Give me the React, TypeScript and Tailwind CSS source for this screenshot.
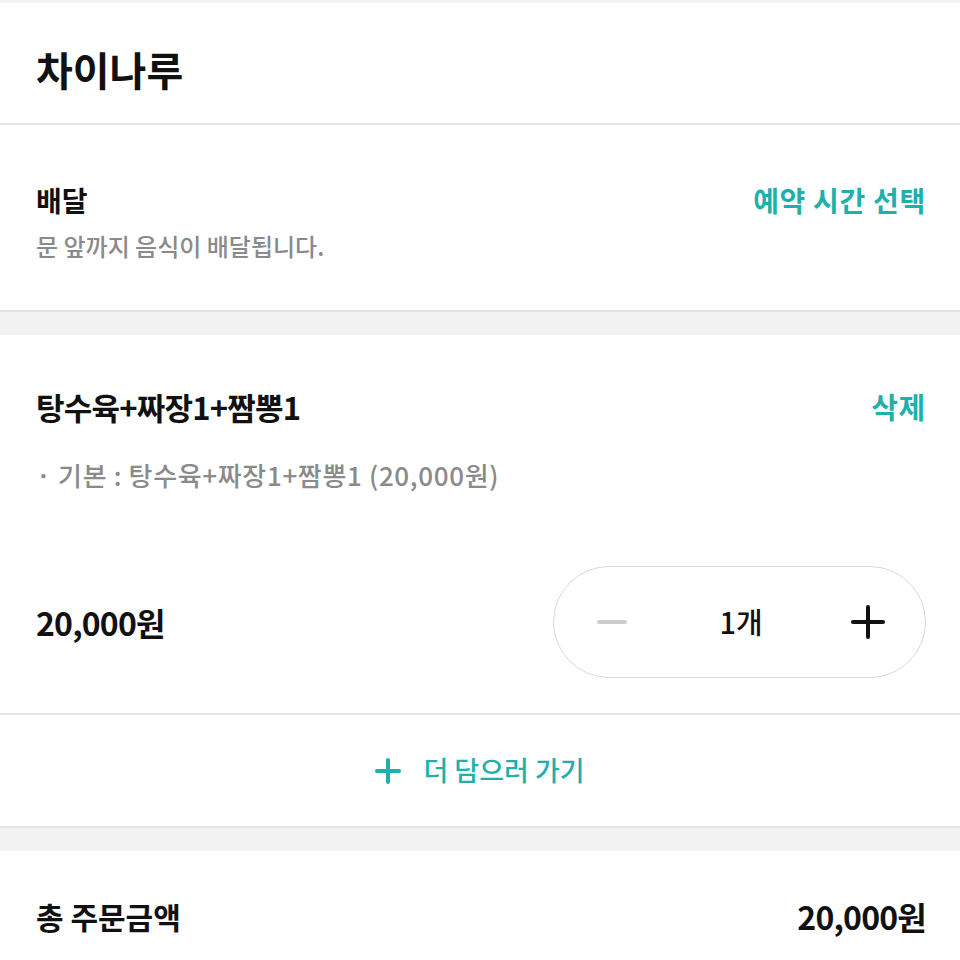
const font = {
  fontFamily: '"Noto Sans CJK KR", "Noto Sans", sans-serif',
};

function PlusIcon({ size, color, stroke }: { size: number; color: string; stroke: number }) {
  return (
    <svg width={size} height={size} viewBox={`0 0 ${size} ${size}`}>
      <line x1={size / 2} y1={stroke / 2} x2={size / 2} y2={size - stroke / 2} stroke={color} strokeWidth={stroke} strokeLinecap="round" />
      <line x1={stroke / 2} y1={size / 2} x2={size - stroke / 2} y2={size / 2} stroke={color} strokeWidth={stroke} strokeLinecap="round" />
    </svg>
  );
}

function App() {
  return (
    <div className="w-[960px] min-h-[960px] bg-white text-[#111]" style={font}>
      <div className="h-[3px] bg-[#f2f2f2]" />

      <header className="h-[122px] pt-[44px] pl-9 pr-[34px] border-b-2 border-[#e6e6e6]">
        <h1 className="h-[44px] leading-[44px] text-[40px] font-bold">차이나루</h1>
      </header>

      <section className="h-[187px] pt-[57px] pl-9 pr-[34px] border-b-2 border-[#e3e3e3]">
        <div className="flex items-center justify-between h-[36px]">
          <span className="text-[28px] font-bold">배달</span>
          <span className="text-[28px] font-bold text-[#1fb0ab] tracking-wide">
            예약 시간 선택
          </span>
        </div>
        <p className="mt-[13px] h-[30px] leading-[30px] text-[24px] text-[#8a8a8a] font-medium">
          문 앞까지 음식이 배달됩니다.
        </p>
      </section>

      <div className="h-[23px] bg-[#f2f2f2]" />

      <section className="pl-9 pr-[34px] pt-[52px] pb-[35px] border-b-2 border-[#e6e6e6]">
        <div className="flex items-center justify-between h-[40px]">
          <span className="text-[31px] font-bold tracking-tight">탕수육+짜장1+짬뽕1</span>
          <span className="text-[29px] font-bold text-[#1fb0ab] tracking-wide">삭제</span>
        </div>
        <p className="mt-[31px] h-[34px] leading-[34px] text-[26px] text-[#8a8a8a] font-medium tracking-wide">
          · 기본 : 탕수육+짜장1+짬뽕1 (20,000원)
        </p>
        <div className="flex items-center justify-between mt-[74px]">
          <span className="text-[32px] font-semibold tracking-tight">20,000원</span>
          <div className="w-[373px] h-[112px] rounded-full border border-[#d9d9d9] flex items-center justify-between pl-[43px] pr-[40px]">
            <span className="w-[30px] h-[4px] rounded-full bg-[#cccccc]" />
            <span className="text-[29px] font-medium pl-1">1개</span>
            <PlusIcon size={34} color="#111" stroke={4} />
          </div>
        </div>
      </section>

      <div className="h-[113px] flex items-center justify-center gap-[22px] border-b-2 border-[#e6e6e6]">
        <PlusIcon size={26} color="#1fb0ab" stroke={4} />
        <span className="text-[27px] font-medium text-[#1fb0ab]">더 담으러 가기</span>
      </div>

      <div className="h-[23px] bg-[#f2f2f2]" />

      <section className="flex items-center justify-between pl-9 pr-[34px] h-[130px]">
        <span className="text-[30px] font-bold">총 주문금액</span>
        <span className="text-[32px] font-semibold tracking-tight">20,000원</span>
      </section>
    </div>
  );
}

export default App;
